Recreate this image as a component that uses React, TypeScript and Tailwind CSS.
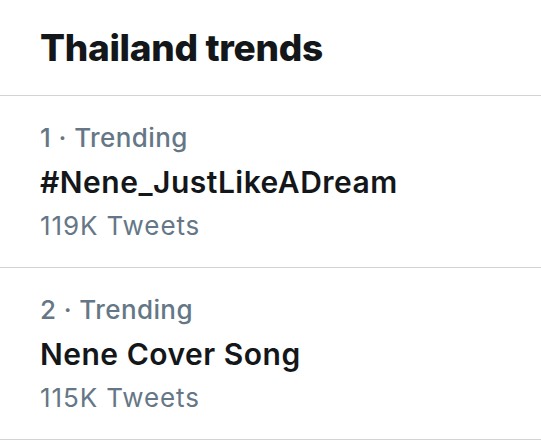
const trends = [
  { rank: 1, name: "#Nene_JustLikeADream", tweets: "119K Tweets" },
  { rank: 2, name: "Nene Cover Song", tweets: "115K Tweets" },
];

function TrendRow({ rank, name, tweets }: { rank: number; name: string; tweets: string }) {
  return (
    <div className="border-b border-[#d3d3d3] px-[40px] pt-[20px] pb-[19px]">
      <div className="text-[26px] leading-[44px] font-medium tracking-[0.4px] text-[#657786]">
        {rank} · Trending
      </div>
      <div className="text-[30px] leading-[44px] font-semibold tracking-[0.5px] text-[#14171a]">
        {name}
      </div>
      <div className="text-[26px] leading-[44px] tracking-[0.9px] text-[#657786]">{tweets}</div>
    </div>
  );
}

export default function App() {
  return (
    <div className="h-[448px] w-[541px] bg-white font-['Inter',sans-serif]">
      <div className="border-b border-[#d3d3d3] px-[40px] pt-[26px] pb-[25px]">
        <h1 className="text-[37px] leading-[44px] font-extrabold tracking-[-0.3px] text-[#14171a]">
          Thailand trends
        </h1>
      </div>
      {trends.map((t) => (
        <TrendRow key={t.rank} {...t} />
      ))}
    </div>
  );
}
